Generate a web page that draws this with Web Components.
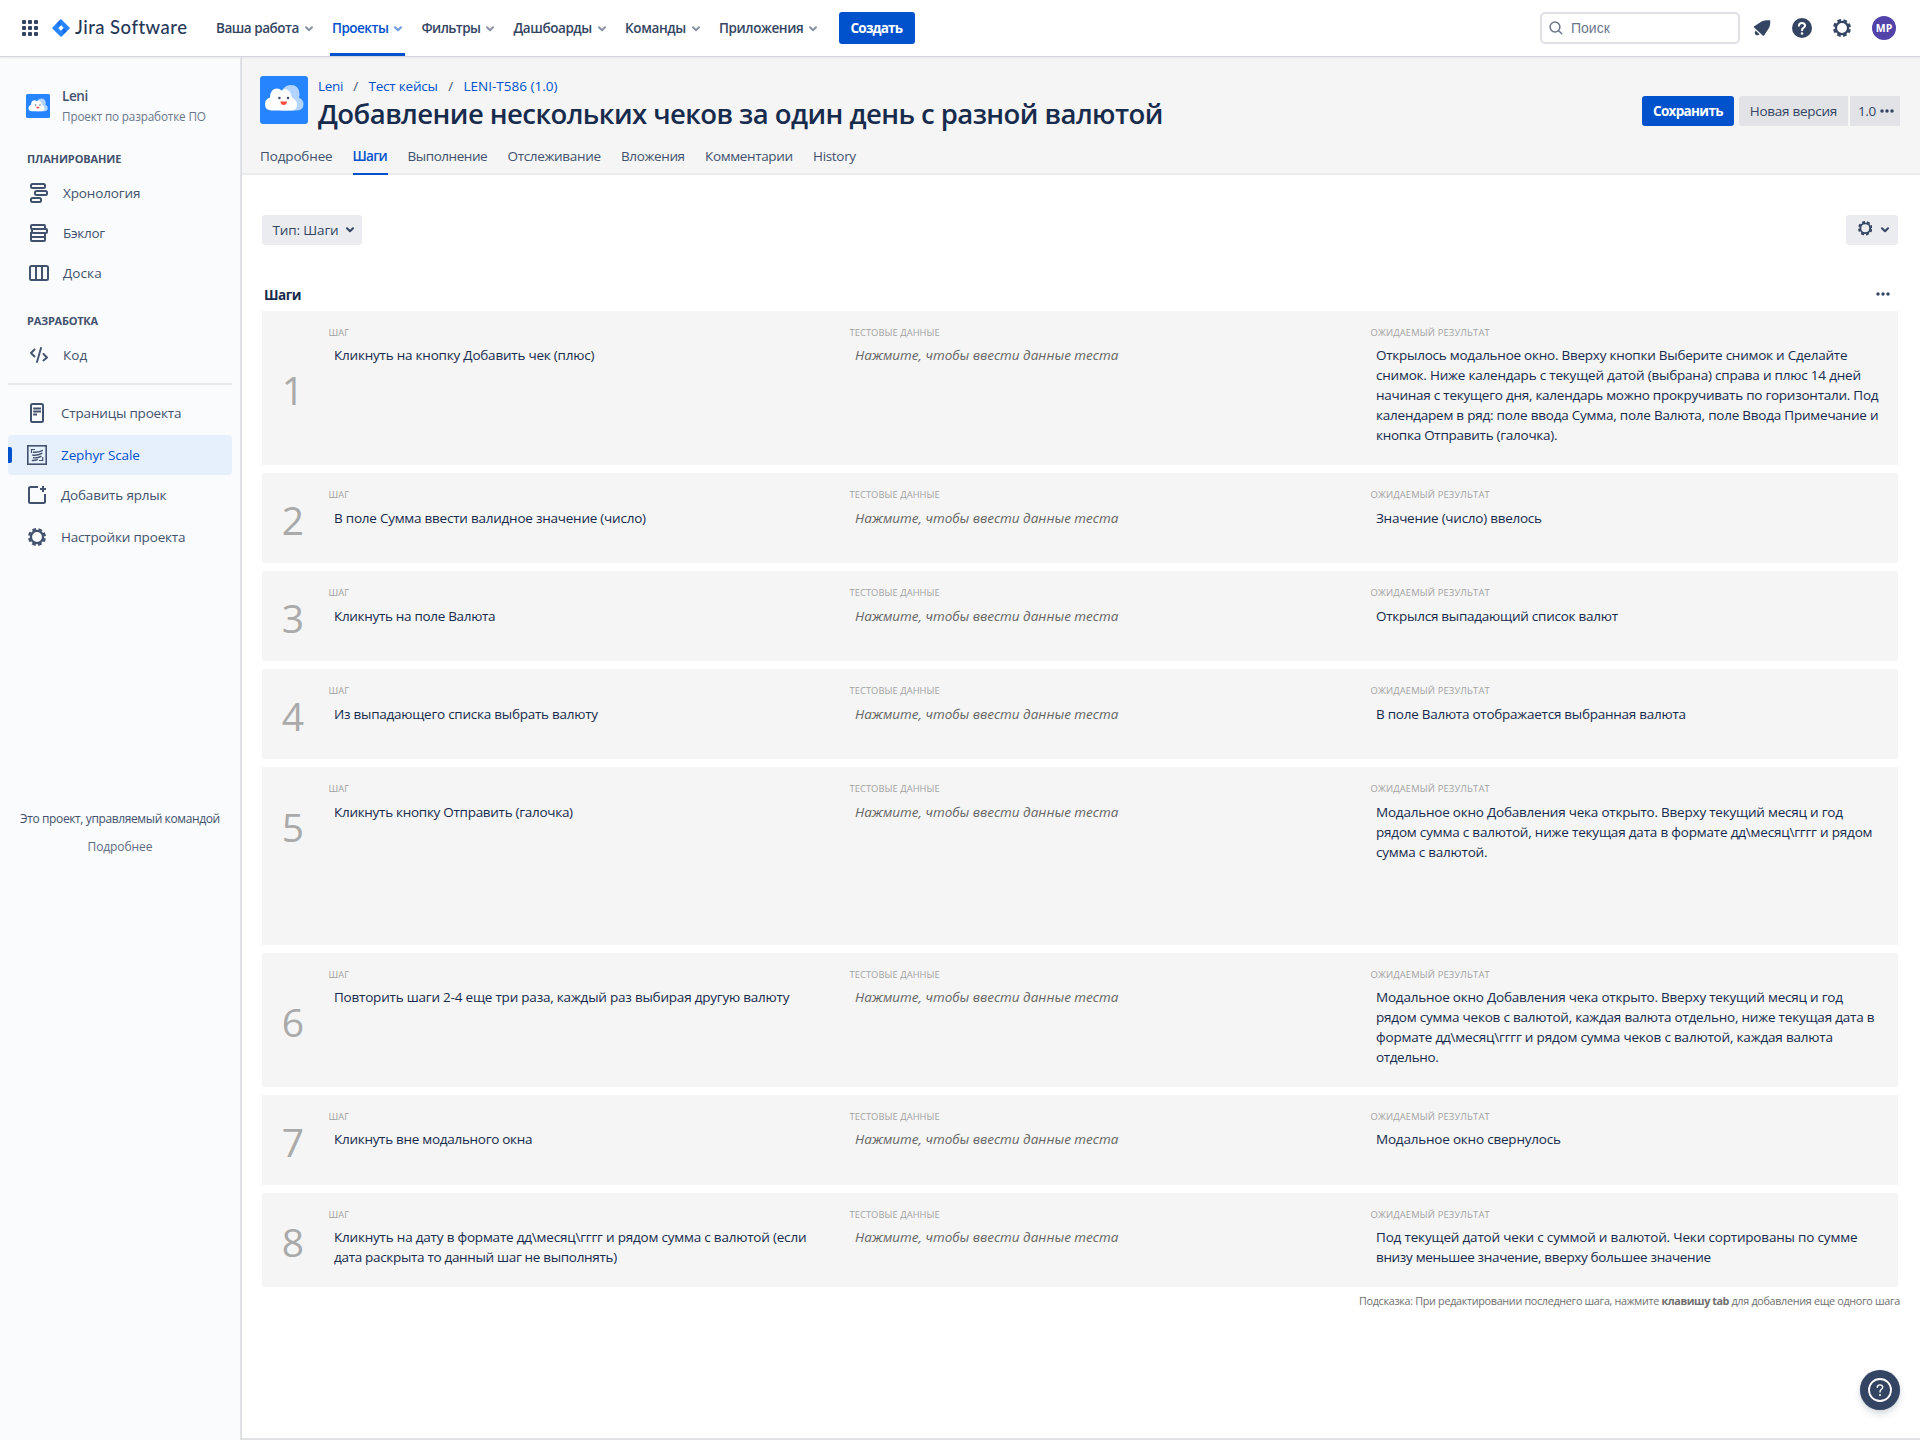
<!DOCTYPE html>
<html lang="ru">
<head>
<meta charset="utf-8">
<title>LENI-T586 (1.0) - Jira Software</title>
<style>
html,body{margin:0;height:100%}
body{font-family:"Open Sans","Noto Sans",sans-serif;font-size:13.5px;line-height:20px;color:#172b4d;background:#fff;display:flex;flex-direction:column;height:1440px;overflow:hidden}
.work{display:flex;flex:1;min-height:0}
</style>
</head>
<body>
<app-topbar></app-topbar>
<div class="work">
  <app-sidebar></app-sidebar>
  <app-main></app-main>
</div>
<help-fab></help-fab>

<script>
const icons = {
  apps: [16,16,'<g fill="#344563">' + [0,6,12].map(y => [0,6,12].map(x => `<rect x="${x}" y="${y}" width="4" height="4" rx="1"/>`).join('')).join('') + '</g>'],
  jira: [18,18,'<defs><linearGradient id="a" x1="1" y1="0" x2="0.3" y2="0.8"><stop offset="0" stop-color="#0052cc"/><stop offset="1" stop-color="#2684ff"/></linearGradient></defs><path fill="#2684ff" d="M9 0l8.5 8.5q.6.6 0 1.2L9 18 .5 9.7q-.6-.6 0-1.2zM9 6L6.2 9 9 11.900 11.800 9z" fill-rule="evenodd"/><path fill="url(#a)" d="M9 0Q6.500 3 9 6L6.300 8.800 3.300 5.800z"/><path fill="url(#a)" d="M9 18q2.500-3 0-6.100l2.700-2.700 3 3z"/>'],
  chev: [8,6,'<path d="M1 1.200l3 3 3-3" fill="none" stroke="currentColor" stroke-width="2" stroke-linecap="round" stroke-linejoin="round"/>'],
  search: [14,14,'<g fill="none" stroke="#6b778c" stroke-width="1.500" stroke-linecap="round"><circle cx="6" cy="6" r="4.900"/><path d="M9.700 9.700l3 3"/></g>'],
  notify: [18,18,'<g fill="#344563"><path d="M1.200 8.600Q.4 8 1.300 7.300L9 2.300Q12 .9 16.500 1.200 17.300 1.300 17.300 2.200 17.400 6.500 16 9L11 16.600q-.7.9-1.300 0z"/><path d="M2.600 11.600l4 4q-2.600 1.500-4.100-.2-1.400-1.700.1-3.800z"/></g>'],
  help: [20,20,'<circle cx="10" cy="10" r="10" fill="#344563"/><path d="M6.900 7.700Q7.100 5 10 5t3.100 2.600Q13.100 9 11.400 10 10 10.700 10 12.300" fill="none" stroke="#fff" stroke-width="2" stroke-linecap="round"/><circle cx="10" cy="15.400" r="1.250" fill="#fff"/>'],
  gear: [18,18,'<g fill="none" stroke="currentColor"><circle cx="9" cy="9" r="6.100" stroke-width="2.300"/><circle cx="9" cy="9" r="7.900" stroke-width="2.200" stroke-dasharray="3.700 2.505" stroke-dashoffset="4.950"/></g>'],
  timeline: [18,20,'<g fill="none" stroke="#42526e" stroke-width="2"><rect x="1" y="1" width="14" height="4" rx="1.500"/><rect x="5" y="8" width="12" height="4" rx="1.500"/><rect x="1" y="15" width="10" height="4" rx="1.500"/></g>'],
  backlog: [18,18,'<g fill="none" stroke="#42526e" stroke-width="2"><rect x="1" y="1" width="14" height="4" rx="1"/><rect x="2" y="5" width="15" height="4" rx="1"/><path d="M1 8v8q0 1 1 1h12q1 0 1-1V9M1 13h14"/></g>'],
  board: [20,16,'<g fill="none" stroke="#42526e" stroke-width="2"><rect x="1" y="1" width="18" height="14" rx="1.500"/><path d="M7 1v14M13 1v14"/></g>'],
  code: [18,16,'<g fill="none" stroke="#42526e" stroke-width="1.900" stroke-linecap="round" stroke-linejoin="round"><path d="M4.500 2.500L1 6l3.500 3.500M13.500 7L17 10.500 13.500 13.500M11 1L7 15"/></g>'],
  page: [14,20,'<g fill="none" stroke="#42526e" stroke-width="2"><rect x="1" y="1" width="12" height="18" rx="1.500"/><path d="M3.200 5.500H11M3.200 8.500H11M3.200 11.500H7" stroke-width="1.800"/></g>'],
  zephyr: [20,20,'<g fill="none" stroke="#42526e"><rect x=".8" y=".8" width="18.400" height="18.400" stroke-width="1.600"/><path d="M4.500 8V4.500H8M15.700 12v3.500H12" stroke-width="1.200"/><path d="M6 7.200q4.500.6 9.800-1.900M5.300 10q5 .8 10-1.900M6 12.700q4.500.7 8.500-1.600M4.800 15.400q3 .3 6-1.100" stroke-width="1.400"/></g>'],
  add: [18,18,'<g fill="none" stroke="#42526e" stroke-width="2"><path d="M10 1H2.500Q1 1 1 2.500v13Q1 17 2.500 17h13q1.500 0 1.500-1.500V8M15 0v6M12 3h6"/></g>'],
  dots: [14,4,'<g fill="currentColor"><circle cx="2" cy="2" r="1.700"/><circle cx="7" cy="2" r="1.700"/><circle cx="12" cy="2" r="1.700"/></g>'],
  cloud: [48,48,'<rect width="48" height="48" rx="3" fill="#2684ff"/><path fill="#b3d4ff" d="M23 13q3-4 8-4 8 0 8.500 9-.2 2.500-.7 3.500Q43.500 23.500 43.500 28q0 6.500-7 6.500H20z"/><path fill="#fff" d="M11.500 34.500Q5 34.500 5 28q0-5 5-6.500.3-9 7-9 3 0 4.500 2Q23 13 25 13q5.500.5 7 9 4.800 1.500 5 6.500 0 6-6 6z"/><circle cx="19.400" cy="22" r="1.300" fill="#42526e"/><circle cx="28" cy="22" r="1.300" fill="#42526e"/><path d="M20.300 25.500h6.800q-.5 3.400-3.400 3.400t-3.400-3.400z" fill="#ff4b3a"/>'],
  fab: [24,24,'<circle cx="12" cy="12" r="11" fill="none" stroke="#fff" stroke-width="1.800"/><path d="M9.300 9.400Q9.400 6.900 12 6.900t2.700 2.400q0 1.200-1.500 2.200-1.200.8-1.200 2.600" fill="none" stroke="#fff" stroke-width="1.400" stroke-linecap="round"/><circle cx="12" cy="16.900" r="1" fill="#fff"/>']
};

function component(name, html, setup) {
  const template = document.createElement('template');
  template.innerHTML = html;
  customElements.define(name, class extends HTMLElement {
    connectedCallback() {
      if (this.shadowRoot) return;
      const root = this.attachShadow({ mode: 'open' });
      root.append(template.content.cloneNode(true));
      if (setup) setup(this, root);
    }
  });
}

component('app-topbar', `<style>
:host{display:flex;align-items:center;height:56px;box-sizing:border-box;background:#fff;padding:0 24px 0 22px;position:relative;z-index:2;color:#344563;box-shadow:0 1px 0 #d3d6dd,0 2px 2px #e4e6ea;flex:none}
.logo{font:500 18.500px/24px Lato,sans-serif;color:#253858;margin:-2px 27px 0 5px}
nav{display:flex;height:56px}
ui-button{margin-left:4.500px}
.search{display:flex;align-items:center;width:200px;height:32px;box-sizing:border-box;border:2px solid #dfe1e6;border-radius:5px;padding-left:8px;margin-left:auto;gap:8px;font:14px/18px "Liberation Sans",sans-serif;color:#6b778c}
.search ui-icon{margin-left:-1px}
.tools{display:flex;align-items:center;margin-left:13px}
.avatar{width:24px;height:24px;border-radius:50%;background:#5243aa;color:#fff;font:700 10.500px/24px "Open Sans",sans-serif;text-align:center;margin-left:21px}
</style>
<ui-icon name="apps"></ui-icon><ui-icon name="jira" style="margin-left:14px"></ui-icon>
<div class="logo"><fit-text w="112" trim="0">Jira Software</fit-text></div>
<nav>
<nav-item><fit-text w="84">Ваша работа</fit-text></nav-item>
<nav-item current><fit-text w="57.500">Проекты</fit-text></nav-item>
<nav-item><fit-text w="60">Фильтры</fit-text></nav-item>
<nav-item><fit-text w="79.500">Дашбоарды</fit-text></nav-item>
<nav-item><fit-text w="62">Команды</fit-text></nav-item>
<nav-item><fit-text w="85.500">Приложения</fit-text></nav-item>
</nav>
<ui-button primary style="width:76px;height:32px"><fit-text w="53">Создать</fit-text></ui-button>
<div class="search"><ui-icon name="search"></ui-icon><span>Поиск</span></div>
<div class="tools"><ui-icon name="notify"></ui-icon><ui-icon name="help" style="margin-left:21px"></ui-icon><ui-icon name="gear" style="margin:-1px 0 0 21px"></ui-icon><div class="avatar">MP</div></div>`);

component('nav-item', `<style>
:host{display:flex;align-items:center;gap:4.500px;padding:0 2.500px 0 2px;margin-right:15px;height:56px;box-sizing:border-box;font-weight:600;border-bottom:3px solid transparent;border-top:3px solid transparent;--c:#8993a4}
:host([current]){color:#0052cc;border-bottom-color:#0052cc;--c:#6c9ade}
ui-icon{color:var(--c);margin-top:1px}
::slotted(*){margin-top:-1px}
</style><slot></slot><ui-icon name="chev"></ui-icon>`);

component('ui-button', `<style>
:host{display:inline-flex;align-items:center;justify-content:center;height:30px;border-radius:3px;background:#ebecf0;color:#344563;box-sizing:border-box}
:host([primary]){background:#0052cc;color:#fff;font-weight:700}
:host([muted]){background:#e2e3e7}
</style><slot></slot>`);

component('app-sidebar', `<style>
:host{display:flex;flex-direction:column;width:240px;background:#fafbfc;color:#42526e;flex:none;box-shadow:1px 0 0 #e3e4e7,2px 0 0 #dcdde0;z-index:1}
.project{display:flex;padding:29px 0 0 26px;gap:12px}
.project ui-icon{margin-top:9px}
.project b{display:block;font-weight:600;margin-top:1px}
.project small{display:block;font-size:11.750px;color:#6b778c}
h2{margin:0;font:700 11px/15px "Open Sans",sans-serif;padding-left:27px}
.rule{height:2px;background:#e6e8eb;margin:13px 8px 7px}
.foot{display:flex;flex-direction:column;align-items:center;font-size:12px;line-height:20px;margin-top:252px;gap:8px;padding-left:1px}
.foot span{color:#5e6c84;font-weight:500}
</style>
<div class="project"><ui-icon name="cloud" size="24"></ui-icon><div><b><fit-text w="27">Leni</fit-text></b><small><fit-text w="145">Проект по разработке ПО</fit-text></small></div></div>
<h2 style="margin-top:25px"><fit-text w="95.500">ПЛАНИРОВАНИЕ</fit-text></h2>
<side-item icon="timeline" style="margin-top:7px"><fit-text w="78.500">Хронология</fit-text></side-item>
<side-item icon="backlog"><fit-text w="43">Бэклог</fit-text></side-item>
<side-item icon="board"><fit-text w="40">Доска</fit-text></side-item>
<h2 style="margin-top:20px"><fit-text w="72">РАЗРАБОТКА</fit-text></h2>
<side-item icon="code" style="margin-top:7px"><fit-text w="25.500">Код</fit-text></side-item>
<div class="rule" style="margin-top:8px"></div>
<side-item low icon="page" style="margin-top:1px"><fit-text w="121.500">Страницы проекта</fit-text></side-item>
<side-item low current icon="zephyr" style="margin-top:2px"><fit-text w="80">Zephyr Scale</fit-text></side-item>
<side-item low icon="add"><fit-text w="106.500">Добавить ярлык</fit-text></side-item>
<side-item low icon="gear" style="margin-top:2px"><fit-text w="125.500">Настройки проекта</fit-text></side-item>
<div class="foot"><fit-text w="201">Это проект, управляемый командой</fit-text><span><fit-text w="66">Подробнее</fit-text></span></div>`);

component('side-item', `<style>
:host{display:flex;align-items:center;height:40px;margin:0 8px;border-radius:4px;flex:none}
.mark{width:4px;height:16px;border-radius:0 2px 2px 0}
.icon{width:20px;display:flex;justify-content:center;margin:0 14px 0 17px}
:host([low]) .icon{margin:0 14px 0 15px}
:host([current]){background:#e6effc;color:#0052cc}
:host([current]) .mark{background:#0052cc}
</style><div class="mark"></div><div class="icon"></div><slot></slot>`, (host, root) => {
  const icon = document.createElement('ui-icon');
  icon.setAttribute('name', host.getAttribute('icon'));
  root.querySelector('.icon').append(icon);
});

component('app-main', `<style>
:host{display:flex;flex-direction:column;flex:1;margin-left:2px;box-sizing:border-box;border-bottom:2px solid #e1e2e4;min-width:0}
header{height:119px;box-sizing:border-box;background:#f5f5f5;border-bottom:2px solid #ebecf0;padding:20px 20px 0 18px;display:flex;flex-direction:column;flex:none}
.top{display:flex;height:58px;flex:none}
.crumbs{display:flex;color:#0052cc;height:20px}
.crumbs i{font-style:normal;color:#42526e;width:25.500px;text-align:center}
.title{margin:0;font:600 27.500px/35px "Open Sans",sans-serif}
.names{margin-left:10px}
.actions{display:flex;margin:20px 0 0 auto}
nav{display:flex;gap:20px;margin-top:12px;height:29px;flex:none}
.bar{display:flex;justify-content:space-between;padding:40px 22px 0 20px}
.sec{display:flex;justify-content:space-between;align-items:center;padding:40px 30px 6px 22px;height:20px;font-weight:700}
.cards{display:flex;flex-direction:column;gap:8px;padding:0 22px 0 20px}
.tip{display:flex;justify-content:flex-end;font-size:10.800px;line-height:15px;color:#707070;padding:6px 20px 0 0}
</style>
<header><div class="top"><ui-icon name="cloud"></ui-icon>
<div class="names"><div class="crumbs"><fit-text w="25" trim="0">Leni</fit-text><i>/</i><fit-text w="69.500" trim=".3">Тест кейсы</fit-text><i>/</i><fit-text w="94" trim="0">LENI-T586 (1.0)</fit-text></div>
<h1 class="title"><fit-text w="846">Добавление нескольких чеков за один день с разной валютой</fit-text></h1></div>
<div class="actions"><ui-button primary style="width:92px;padding-left:1px"><fit-text w="71">Сохранить</fit-text></ui-button><ui-button muted style="width:109px;margin-left:5px;border-radius:3px 0 0 3px;padding-left:1px"><fit-text w="88.500">Новая версия</fit-text></ui-button><ui-button muted style="width:50px;margin-left:2px;border-radius:0;gap:3px;padding-left:2px"><fit-text w="19">1.0</fit-text><ui-icon name="dots"></ui-icon></ui-button></div></div>
<nav><tab-item><fit-text w="72.500" trim="0">Подробнее</fit-text></tab-item><tab-item current><fit-text w="35" trim=".5">Шаги</fit-text></tab-item><tab-item><fit-text w="80" trim=".3">Выполнение</fit-text></tab-item><tab-item><fit-text w="93.500" trim=".3">Отслеживание</fit-text></tab-item><tab-item><fit-text w="64" trim=".3">Вложения</fit-text></tab-item><tab-item><fit-text w="88" trim=".3">Комментарии</fit-text></tab-item><tab-item><fit-text w="44">History</fit-text></tab-item></nav>
</header>
<div class="bar"><ui-button style="width:100px;gap:7px;padding-left:2px"><fit-text w="66" trim="0">Тип: Шаги</fit-text><ui-icon name="chev"></ui-icon></ui-button><ui-button style="width:52px;gap:9px;padding-left:3px"><ui-icon name="gear" size="14.500" style="margin-top:-3px"></ui-icon><ui-icon name="chev"></ui-icon></ui-button></div>
<div class="sec"><fit-text w="37" trim="0">Шаги</fit-text><ui-icon name="dots" style="color:#344563;margin-top:-2px"></ui-icon></div>
<div class="cards">
<step-card n="1" style="height:154px"><fit-text slot="a" w="261.500">Кликнуть на кнопку Добавить чек (плюс)</fit-text><fit-text slot="c" w="472.500">Открылось модальное окно. Вверху кнопки Выберите снимок и Сделайте</fit-text><fit-text slot="c" w="486">снимок. Ниже календарь с текущей датой (выбрана) справа и плюс 14 дней</fit-text><fit-text slot="c" w="503.500">начиная с текущего дня, календарь можно прокручивать по горизонтали. Под</fit-text><fit-text slot="c" w="503.500">календарем в ряд: поле ввода Сумма, поле Валюта, поле Ввода Примечание и</fit-text><fit-text slot="c" w="182.500">кнопка Отправить (галочка).</fit-text></step-card>
<step-card n="2" down style="height:90px"><fit-text slot="a" w="313">В поле Сумма ввести валидное значение (число)</fit-text><fit-text slot="c" w="167">Значение (число) ввелось</fit-text></step-card>
<step-card n="3" down style="height:90px"><fit-text slot="a" w="162.500">Кликнуть на поле Валюта</fit-text><fit-text slot="c" w="243">Открылся выпадающий список валют</fit-text></step-card>
<step-card n="4" down style="height:90px"><fit-text slot="a" w="265">Из выпадающего списка выбрать валюту</fit-text><fit-text slot="c" w="311">В поле Валюта отображается выбранная валюта</fit-text></step-card>
<step-card n="5" down style="height:178px;--lift:62px"><fit-text slot="a" w="240">Кликнуть кнопку Отправить (галочка)</fit-text><fit-text slot="c" w="468">Модальное окно Добавления чека открыто. Вверху текущий месяц и год</fit-text><fit-text slot="c" w="497.500">рядом сумма с валютой, ниже текущая дата в формате дд\\месяц\\гггг и рядом</fit-text><fit-text slot="c" w="112.500">сумма с валютой.</fit-text></step-card>
<step-card n="6" style="height:134px"><fit-text slot="a" w="456.500">Повторить шаги 2-4 еще три раза, каждый раз выбирая другую валюту</fit-text><fit-text slot="c" w="468">Модальное окно Добавления чека открыто. Вверху текущий месяц и год</fit-text><fit-text slot="c" w="499.500">рядом сумма чеков с валютой, каждая валюта отдельно, ниже текущая дата в</fit-text><fit-text slot="c" w="458">формате дд\\месяц\\гггг и рядом сумма чеков с валютой, каждая валюта</fit-text><fit-text slot="c" w="63.500">отдельно.</fit-text></step-card>
<step-card n="7" style="height:90px"><fit-text slot="a" w="199.500">Кликнуть вне модального окна</fit-text><fit-text slot="c" w="186">Модальное окно свернулось</fit-text></step-card>
<step-card n="8" style="height:94px"><fit-text slot="a" w="473.500">Кликнуть на дату в формате дд\\месяц\\гггг и рядом сумма с валютой (если</fit-text><fit-text slot="a" w="284">дата раскрыта то данный шаг не выполнять)</fit-text><fit-text slot="c" w="482.500">Под текущей датой чеки с суммой и валютой. Чеки сортированы по сумме</fit-text><fit-text slot="c" w="336">внизу меньшее значение, вверху большее значение</fit-text></step-card>
</div>
<div class="tip"><fit-text w="302.500" trim="0">Подсказка: При редактировании последнего шага, нажмите </fit-text><b><fit-text w="67.500" trim="0">клавишу tab</fit-text></b><fit-text w="171" trim="0"> для добавления еще одного шага</fit-text></div>`);

component('tab-item', `<style>
:host{display:block;height:27px;color:#42526e;border-bottom:2px solid transparent}
:host([current]){color:#0052cc;font-weight:600;border-color:#0052cc}
</style><slot></slot>`);

component('step-card', `<style>
:host{display:flex;background:#f5f5f5;box-sizing:border-box;flex:none}
.num{display:flex;align-items:center;justify-content:center;width:60px;box-sizing:border-box;padding:2px 0 var(--lift,0px) 2px;font:400 39px/53px "Open Sans",sans-serif;color:#aaa}
.grid{display:grid;grid-template-columns:521px 521px 1fr;flex:1;padding:15px 0 0 6.500px}
h4{margin:0 0 6px;font:400 9.400px/13px "Open Sans",sans-serif;color:#a3a3a3}
:host([down]) h4{margin-bottom:7px}
.v{display:flex;flex-direction:column;align-items:flex-start;padding-left:5.500px;line-height:20px}
.v.i{font-style:italic;color:#666}
</style>
<div class="num"></div><div class="grid">
<div><h4><fit-text w="22">ШАГ</fit-text></h4><div class="v"><slot name="a"></slot></div></div>
<div><h4><fit-text w="91.500">ТЕСТОВЫЕ ДАННЫЕ</fit-text></h4><div class="v i"><fit-text w="264.500">Нажмите, чтобы ввести данные теста</fit-text></div></div>
<div><h4><fit-text w="120.500">ОЖИДАЕМЫЙ РЕЗУЛЬТАТ</fit-text></h4><div class="v"><slot name="c"></slot></div></div></div>`, (host, root) => {
  root.querySelector('.num').textContent = host.getAttribute('n');
});

component('help-fab', `<style>
:host{position:absolute;left:1860px;top:1370px;width:40px;height:40px;border-radius:50%;background:#344563;display:flex;align-items:center;justify-content:center;box-shadow:0 4px 8px -2px rgba(9,30,66,.25),0 0 1px rgba(9,30,66,.31);z-index:3}
</style><ui-icon name="fab"></ui-icon>`);

component('ui-icon', `<style>:host{display:block;flex:none}svg{display:block}</style>`, (host, root) => {
  const [w, h, body] = icons[host.getAttribute('name')];
  const k = (host.getAttribute('size') || w) / w;
  const t = document.createElement('template');
  t.innerHTML = `<svg width="${w * k}" height="${h * k}" viewBox="0 0 ${w} ${h}">${body}</svg>`;
  root.append(t.content);
});

/* Text run that tracks its letters so that they fill the width given in w, less the end margin given in trim. */
component('fit-text', `<style>:host{display:inline-block;white-space:pre;vertical-align:top}</style><slot></slot>`, host => {
  const want = parseFloat(host.getAttribute('w'));
  const trim = parseFloat(host.getAttribute('trim') ?? 1.2);
  const have = host.getBoundingClientRect().width;
  host.style.letterSpacing = ((want - trim - have) / host.textContent.length).toFixed(4) + 'px';
  host.style.width = want + 'px';
});
</script>
</body>
</html>
